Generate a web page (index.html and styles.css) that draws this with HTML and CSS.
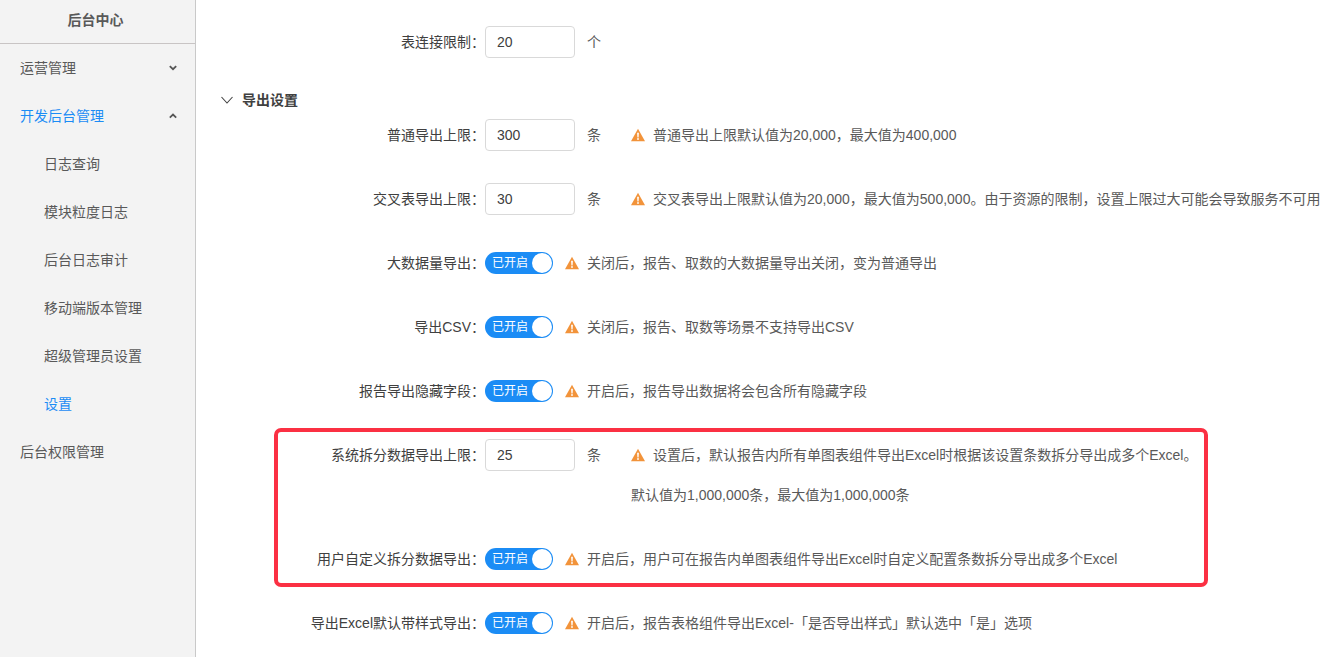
FILE: index.html
```html
<!DOCTYPE html>
<html lang="zh-CN">
<head>
<meta charset="utf-8">
<title>后台中心</title>
<link rel="stylesheet" href="styles.css">
</head>
<body>
<svg class="defs" width="0" height="0" aria-hidden="true"><defs>
<symbol id="warn" viewBox="0 0 14 14"><path d="M7 .8 14 13.2H0Z" fill="#f2933a"/><path d="M6.1 4.8h1.8l-.3 4.7H6.4zM6.1 10.2h1.8v1.6H6.1z" fill="#fff"/></symbol>
</defs></svg>
<div class="app">
<aside class="sidebar">
<div class="side-title">后台中心</div>
<nav>
<div class="nav-item"><span>运营管理</span><svg class="caret" viewBox="0 0 8 6"><path d="M.8 1.2 4 4.2l3.2-3" fill="none" stroke="#555" stroke-width="1.8"/></svg></div>
<div class="nav-item active"><span>开发后台管理</span><svg class="caret" viewBox="0 0 8 6"><path d="M.8 4.6 4 1.6l3.2 3" fill="none" stroke="#555" stroke-width="1.8"/></svg></div>
<div class="nav-item sub">日志查询</div>
<div class="nav-item sub">模块粒度日志</div>
<div class="nav-item sub">后台日志审计</div>
<div class="nav-item sub">移动端版本管理</div>
<div class="nav-item sub">超级管理员设置</div>
<div class="nav-item sub active">设置</div>
<div class="nav-item">后台权限管理</div>
</nav>
</aside>
<main class="main">
<div class="row"><label class="label">表连接限制：</label><input class="num" value="20"><span class="unit">个</span></div>
<div class="section"><svg class="chev" viewBox="0 0 12 8"><path d="M.5 1 6 7 11.5 1" fill="none" stroke="#404040" stroke-width="1.1"/></svg><span>导出设置</span></div>
<div class="row"><label class="label">普通导出上限：</label><input class="num" value="300"><span class="unit">条</span><svg class="warn wide"><use href="#warn"/></svg><span class="tip">普通导出上限默认值为20,000，最大值为400,000</span></div>
<div class="row"><label class="label">交叉表导出上限：</label><input class="num" value="30"><span class="unit">条</span><svg class="warn wide"><use href="#warn"/></svg><span class="tip">交叉表导出上限默认值为20,000，最大值为500,000。由于资源的限制，设置上限过大可能会导致服务不可用</span></div>
<div class="row"><label class="label">大数据量导出：</label><span class="switch"><span>已开启</span><i></i></span><svg class="warn"><use href="#warn"/></svg><span class="tip">关闭后，报告、取数的大数据量导出关闭，变为普通导出</span></div>
<div class="row"><label class="label">导出CSV：</label><span class="switch"><span>已开启</span><i></i></span><svg class="warn"><use href="#warn"/></svg><span class="tip">关闭后，报告、取数等场景不支持导出CSV</span></div>
<div class="row"><label class="label">报告导出隐藏字段：</label><span class="switch"><span>已开启</span><i></i></span><svg class="warn"><use href="#warn"/></svg><span class="tip">开启后，报告导出数据将会包含所有隐藏字段</span></div>
<div class="highlighted">
<div class="row tall"><label class="label">系统拆分数据导出上限：</label><input class="num" value="25"><span class="unit">条</span><div class="tip-block"><div class="tip-line"><svg class="warn wide"><use href="#warn"/></svg><span class="tip">设置后，默认报告内所有单图表组件导出Excel时根据该设置条数拆分导出成多个Excel。</span></div><div class="tip-second">默认值为1,000,000条，最大值为1,000,000条</div></div></div>
<div class="row"><label class="label">用户自定义拆分数据导出：</label><span class="switch"><span>已开启</span><i></i></span><svg class="warn"><use href="#warn"/></svg><span class="tip">开启后，用户可在报告内单图表组件导出Excel时自定义配置条数拆分导出成多个Excel</span></div>
<div class="redbox"></div>
</div>
<div class="row"><label class="label">导出Excel默认带样式导出：</label><span class="switch"><span>已开启</span><i></i></span><svg class="warn"><use href="#warn"/></svg><span class="tip">开启后，报告表格组件导出Excel-「是否导出样式」默认选中「是」选项</span></div>
</main>
</div>
</body>
</html>
```
FILE: styles.css
```css
* { box-sizing: border-box; }
html, body { margin: 0; height: 100%; overflow: hidden; }
body { font: 14px/20px "Liberation Sans", "Noto Sans CJK SC", sans-serif; color: #595959; background: #fff; }
.defs { position: absolute; }
.app { display: flex; height: 657px; }
.sidebar { width: 196px; flex: none; background: #f3f3f3; border-right: 1px solid #c9c9c9; }
.side-title { height: 44px; display: flex; align-items: center; justify-content: center; padding: 0 4px 4px 0; font-weight: 700; border-bottom: 1px solid #c8c4c4; }
.nav-item { height: 48px; display: flex; align-items: center; justify-content: space-between; padding: 0 18px 0 20px; }
.nav-item.sub { padding-left: 44px; }
.nav-item.active { color: #1b8cf5; }
.caret { width: 8px; height: 6px; }
.main { flex: 1; min-width: 0; padding-top: 26px; white-space: nowrap; }
.row { display: flex; align-items: center; height: 32px; margin-bottom: 32px; }
.label { width: 289px; flex: none; text-align: right; color: #404040; }
.num { width: 90px; height: 32px; flex: none; padding: 0 11px; border: 1px solid #d9d9d9; border-radius: 4px; font: inherit; color: #404040; background: #fff; outline: none; }
.unit { margin-left: 12px; width: 14px; flex: none; }
.section { display: flex; align-items: center; height: 20px; margin: 0 0 9px 25px; font-weight: 700; color: #404040; }
.chev { width: 12px; height: 8px; margin-right: 9px; }
.warn { width: 14px; height: 14px; flex: none; margin: 0 8px 0 12px; }
.warn.wide { margin: 0 8px 0 30px; }
.tip { white-space: nowrap; }
.switch { width: 68px; height: 22px; flex: none; border-radius: 11px; background: #1b8cf5; color: #fff; font-size: 12px; display: flex; align-items: center; justify-content: space-between; padding: 0 1px 0 7px; }
.switch i { width: 20px; height: 20px; border-radius: 50%; background: #fff; }
.highlighted { position: relative; }
.row.tall { height: 72px; align-items: flex-start; }
.row.tall .label { line-height: 32px; }
.row.tall .unit { line-height: 32px; }
.tip-line { display: flex; align-items: center; height: 32px; }
.tip-second { margin: 14px 0 0 30px; }
.redbox { position: absolute; left: 78px; top: -11px; width: 934px; height: 159px; border: 4px solid #fb3043; border-radius: 7px; pointer-events: none; }
```
